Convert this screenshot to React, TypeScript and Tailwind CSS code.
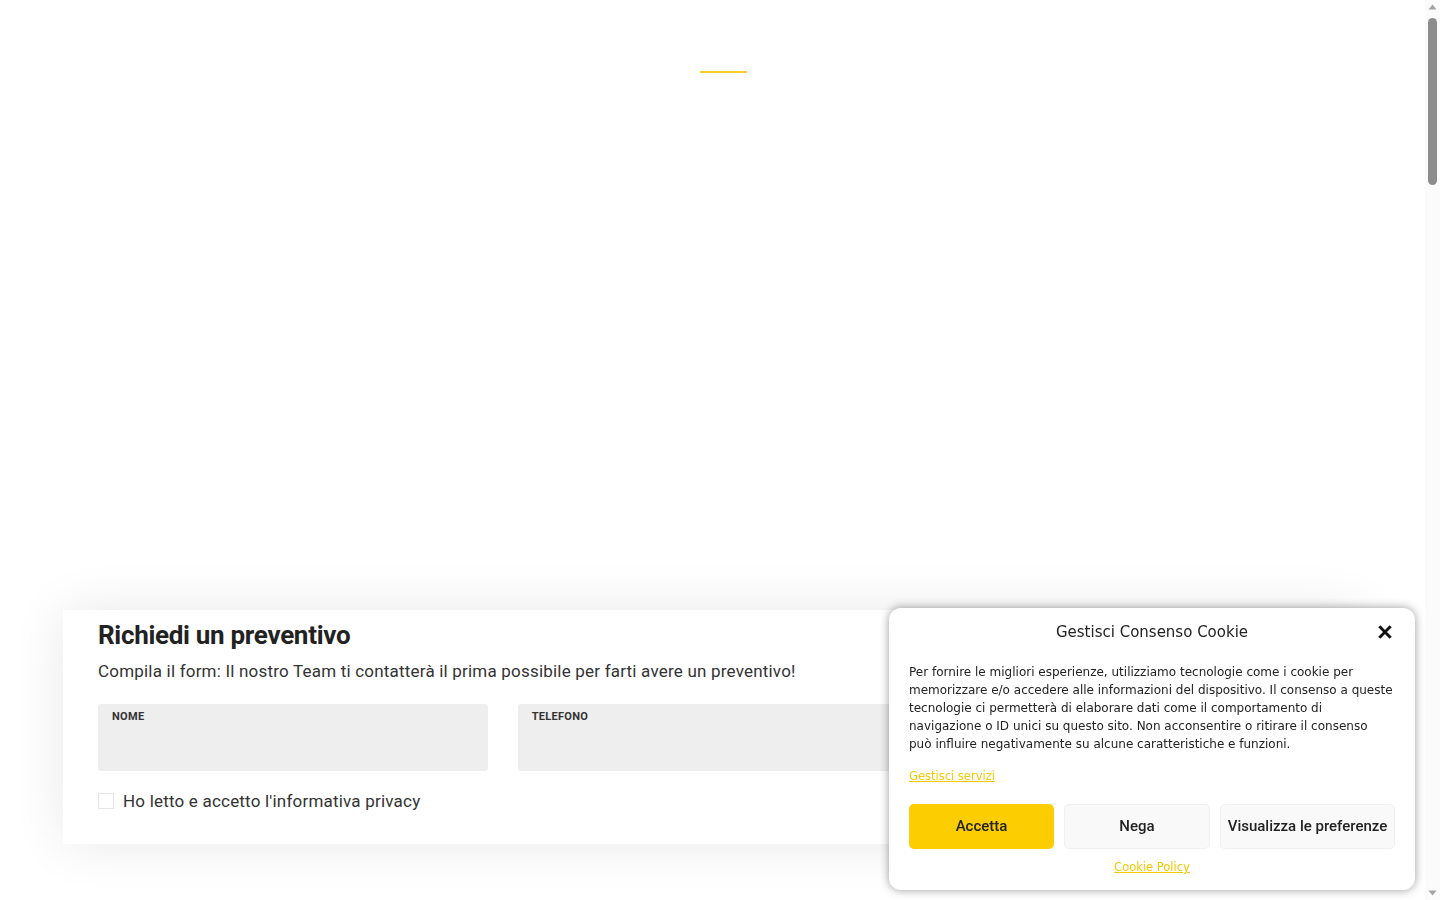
import React from 'react';

const barlow = { fontFamily: 'Roboto, "Liberation Sans", sans-serif' };
const dejavu = { fontFamily: '"DejaVu Sans", "Liberation Sans", sans-serif' };

const Field = ({ label }: { label: string }) => (
  <div className="h-[67px] rounded-[3px] bg-[#eeeeee] px-[14px] pt-[6px]">
    <span className="block text-[11px] font-bold uppercase leading-[14px] tracking-[0.3px] text-[#333]">{label}</span>
  </div>
);

const CookieBanner = () => (
  <div
    className="fixed bottom-[10px] right-[25px] w-[526px] rounded-[12px] bg-white px-[20px] pt-[14px] pb-[12px] shadow-[0_0_10px_rgba(0,0,0,0.4)]"
    style={dejavu}
  >
    <div className="relative flex items-center justify-center">
      <h2 className="text-[15px] leading-[20px] text-[#222]">Gestisci Consenso Cookie</h2>
      <button className="absolute right-[2px] top-[2px] text-[#111]">
        <svg width="16" height="16" viewBox="0 0 24 24" fill="none" stroke="currentColor" strokeWidth="4.4" strokeLinecap="square">
          <path d="M5 5l14 14M19 5L5 19" />
        </svg>
      </button>
    </div>
    <p className="mt-[21px] text-[12px] leading-[18px] text-[#222]">
      Per fornire le migliori esperienze, utilizziamo tecnologie come i cookie per
      <br />
      memorizzare e/o accedere alle informazioni del dispositivo. Il consenso a queste
      <br />
      tecnologie ci permetterà di elaborare dati come il comportamento di
      <br />
      navigazione o ID unici su questo sito. Non acconsentire o ritirare il consenso
      <br />
      può influire negativamente su alcune caratteristiche e funzioni.
    </p>
    <a className="mt-[15px] inline-block text-[11.5px] leading-[16px] text-[#f5c900] underline">Gestisci servizi</a>
    <div className="mt-[17px] flex gap-[10px]" style={barlow}>
      <button className="h-[45px] w-[145px] rounded-[5px] bg-[#fccd00] text-[15px] font-medium text-[#222]">Accetta</button>
      <button className="h-[45px] w-[146px] rounded-[5px] border border-[#f0f0f0] bg-[#f9f9f9] text-[15px] font-medium text-[#222]">
        Nega
      </button>
      <button className="h-[45px] flex-1 rounded-[5px] border border-[#f0f0f0] bg-[#f9f9f9] text-[15px] font-medium text-[#222]">
        Visualizza le preferenze
      </button>
    </div>
    <div className="mt-[5px] text-center">
      <a className="text-[11.5px] leading-[18px] text-[#f5c900] underline">Cookie Policy</a>
    </div>
  </div>
);

// page scrollbar (drawn, the browser hides the native one)
const Scrollbar = () => (
  <div className="fixed right-0 top-0 flex h-screen w-[15px] flex-col items-center bg-[#fbfbfb]">
    <svg className="mt-[4px]" width="9" height="6" viewBox="0 0 9 6">
      <path d="M0.5 5.5L4.5 0.5L8.5 5.5Z" fill="#a3a3a3" />
    </svg>
    <div className="mt-[8px] h-[167px] w-[9px] rounded-full bg-[#8c8c8c]" />
    <div className="flex-1" />
    <svg className="mb-[4px]" width="9" height="6" viewBox="0 0 9 6">
      <path d="M0.5 0.5L4.5 5.5L8.5 0.5Z" fill="#a3a3a3" />
    </svg>
  </div>
);

export default function App() {
  return (
    <div className="bg-white" style={barlow}>
      <div className="mr-[15px] min-h-[4690px]">
        <div className="flex justify-center pt-[71px]">
          <div className="ml-[22px] h-[2px] w-[47px] bg-[#f5cf2a]" />
        </div>

        <section className="mx-[63px] mt-[537px] bg-white px-[35px] pb-[33px] pt-[10px] shadow-[0_0_50px_rgba(0,0,0,0.09)]">
          <h1 className="text-[26px] font-bold leading-[30px] tracking-[-0.3px] text-[#222]">Richiedi un preventivo</h1>
          <p className="mt-[9px] text-[17px] leading-[24px] tracking-[0.2px] text-[#333]">
            Compila il form: Il nostro Team ti contatterà il prima possibile per farti avere un preventivo!
          </p>
          <div className="mt-[21px] grid grid-cols-3 gap-[30px]">
            <Field label="Nome" />
            <Field label="Telefono" />
            <Field label="Email" />
          </div>
          <label className="mt-[20px] flex items-center gap-[9px]">
            <span className="h-[16px] w-[16px] border border-[#e5e5e5] bg-white" />
            <span className="text-[17px] leading-[20px] tracking-[0.2px] text-[#333]">Ho letto e accetto l'informativa privacy</span>
          </label>
        </section>
      </div>

      <Scrollbar />
      <CookieBanner />
    </div>
  );
}
